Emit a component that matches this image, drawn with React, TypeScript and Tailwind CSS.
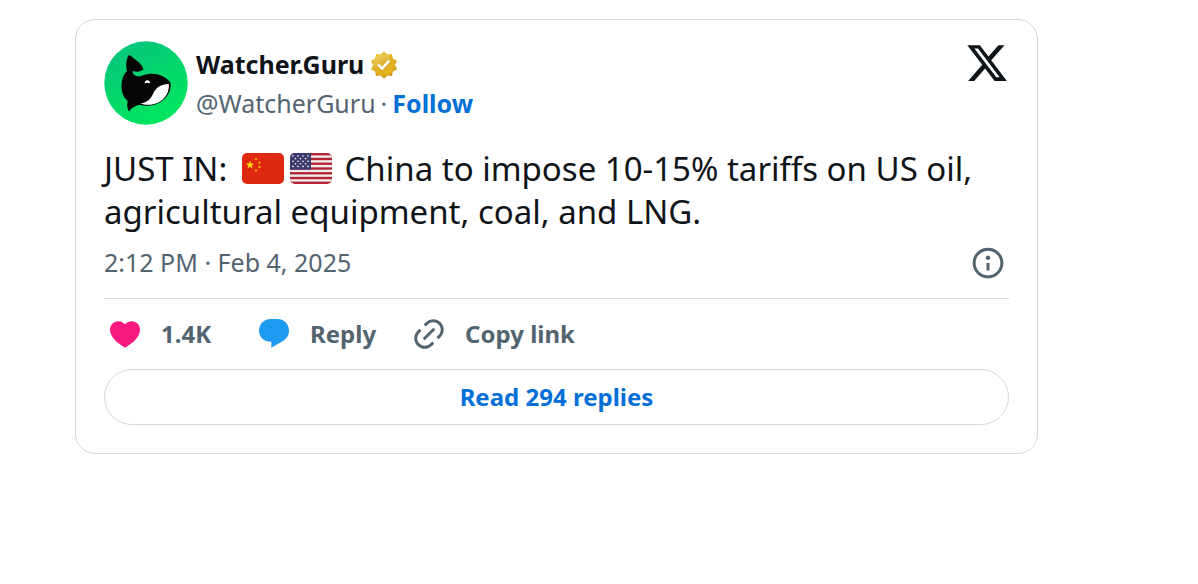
import type { ReactNode } from "react";

const STAR = "M0 -10 2.35 -3.24 9.5 -3.1 3.8 1.24 5.9 8.1 0 4 -5.9 8.1 -3.8 1.24 -9.5 -3.1 -2.35 -3.24z";

function Avatar() {
  return (
    <svg viewBox="0 0 84 84" className="block size-[84px]" role="img" aria-label="Watcher.Guru">
      <defs>
        <linearGradient id="avatar-bg" x1="0.2" y1="0" x2="0.7" y2="1">
          <stop offset="0" stopColor="#06c47c" />
          <stop offset="1" stopColor="#00e85c" />
        </linearGradient>
      </defs>
      <circle cx="42" cy="42" r="41.7" fill="url(#avatar-bg)" />
      <path
        d="M24.7 14C27 14.5 29 17 32 19C35.500 21.500 38 24 39.500 28.500C36.500 30.500 33 31.500 28.700 29.700C28.300 32.500 30 35 35 35.400C38.500 34.800 41 33 46 32.800C54 32.300 62 35.500 66.300 41.300C67.500 46 66 51 63 55C58.500 61 51 64.800 44 64.800C41 64.800 38 64.300 35.500 63.700C31 64.500 27.500 67 25 70.500C23 67.500 22.800 63.500 23.700 60C18.500 55.500 17.300 50 17.500 44C17.600 38 19.500 33.500 23 30C21.700 24.500 22 18.500 24.700 14Z"
        fill="#050505"
      />
      <path
        d="M64.800 43C65.800 54 57 63.800 44.500 63.800C41 63.800 38.500 63.400 36.500 62.500C43.500 61.500 46.500 58 49 53C51.500 47 56.500 43.300 64.800 43Z"
        fill="#fff"
      />
      <path d="M40.700 42.500C40.300 38.300 46.500 38.300 46 42.500C44.300 41.500 42.500 41.500 40.700 42.500Z" fill="#fff" />
    </svg>
  );
}

function GoldBadge() {
  return (
    <svg viewBox="0 0 22 22" className="size-8 shrink-0" role="img" aria-label="Verified account">
      <defs>
        <linearGradient id="badge-edge" x1="0.2" y1="0" x2="0.8" y2="1">
          <stop offset="0" stopColor="#f0c93a" />
          <stop offset="1" stopColor="#cb8f12" />
        </linearGradient>
        <linearGradient id="badge-fill" x1="0.2" y1="0" x2="0.8" y2="1">
          <stop offset="0" stopColor="#ecd268" />
          <stop offset="0.5" stopColor="#e0b025" />
          <stop offset="1" stopColor="#e4b616" />
        </linearGradient>
      </defs>
      <path
        d="M13.324 3.848L11 1.6 8.676 3.848l-3.201-.453-.559 3.184L2.06 8.095 3.48 11l-1.42 2.904 2.856 1.516.559 3.184 3.201-.452L11 20.4l2.324-2.248 3.201.452.559-3.184 2.856-1.516L18.52 11l1.42-2.905-2.856-1.516-.559-3.184z"
        fill="url(#badge-edge)"
      />
      <circle cx="11" cy="11" r="7.2" fill="url(#badge-fill)" />
      <path d="M6.234 12.123l3.428 3.228 5.683-6.206-1.347-1.247-4.4 4.795-2.072-2.072z" fill="#c98c10" />
      <path d="M6.234 11.423l3.428 3.428 5.683-6.206-1.347-1.247-4.4 4.795-2.072-2.072z" fill="#fff" />
    </svg>
  );
}

function ChinaFlag() {
  return (
    <svg viewBox="0 0 42 31" className="h-[31px] w-[42px]" role="img" aria-label="China">
      <rect width="42" height="31" rx="5" fill="#de2910" />
      <g fill="#ffde02">
        <path d={STAR} transform="translate(8 12) scale(.43)" />
        <path d={STAR} transform="translate(14 6) scale(.16)" />
        <path d={STAR} transform="translate(17.5 9.5) scale(.16)" />
        <path d={STAR} transform="translate(17.5 14) scale(.16)" />
        <path d={STAR} transform="translate(14 17.5) scale(.16)" />
      </g>
    </svg>
  );
}

function UsaFlag() {
  const stripes = [1, 3, 5, 7, 9, 11];
  const rows = [0, 1, 2, 3, 4];
  return (
    <svg viewBox="0 0 42 31" className="h-[31px] w-[42px]" role="img" aria-label="United States">
      <defs>
        <clipPath id="usa-shape">
          <rect width="42" height="31" rx="5" />
        </clipPath>
      </defs>
      <g clipPath="url(#usa-shape)">
        <rect width="42" height="31" fill="#b22334" />
        {stripes.map((n) => (
          <rect key={n} y={(n * 31) / 13} width="42" height={31 / 13} fill="#eee" />
        ))}
        <rect width="21" height="16.7" fill="#3c3b6e" />
        {rows.map((row) =>
          (row % 2 ? [5.5, 10.5, 15.5] : [3, 8, 13, 18]).map((x) => (
            <circle key={`${row}-${x}`} cx={x} cy={3 + row * 2.6} r="0.8" fill="#fff" />
          ))
        )}
      </g>
    </svg>
  );
}

function Icon({ d, className }: { d: string; className: string }) {
  return (
    <svg viewBox="0 0 24 24" fill="currentColor" aria-hidden="true" className={`shrink-0 ${className}`}>
      <path d={d} />
    </svg>
  );
}

const icons = {
  x: "M18.244 2.25h3.308l-7.227 8.26 8.502 11.24H16.17l-5.214-6.817L4.99 21.75H1.68l7.73-8.835L1.254 2.25H8.08l4.713 6.231zm-1.161 17.52h1.833L7.084 4.126H5.117z",
  info: "M13.5 8.5c0 .83-.67 1.5-1.5 1.5s-1.5-.67-1.5-1.5S11.17 7 12 7s1.5.67 1.5 1.5zM13 17v-5h-2v5h2zm-1 5.25c5.66 0 10.25-4.59 10.25-10.25S17.66 1.75 12 1.75 1.75 6.34 1.75 12 6.34 22.25 12 22.25zM20.25 12c0 4.56-3.69 8.25-8.25 8.25S3.75 16.56 3.75 12 7.44 3.75 12 3.75s8.25 3.69 8.25 8.25z",
  heart: "M20.884 13.19c-1.351 2.48-4.001 5.12-8.379 7.67l-.503.3-.504-.3c-4.379-2.55-7.029-5.19-8.382-7.67-1.36-2.5-1.41-4.86-.514-6.67.887-1.79 2.647-2.91 4.601-3.01 1.651-.09 3.368.56 4.798 2.01 1.429-1.45 3.146-2.1 4.796-2.01 1.954.1 3.714 1.22 4.601 3.01.896 1.81.846 4.17-.514 6.67z",
  reply: "M2 9.8C2 5.4 5.3 2 9.7 2h4.6C18.7 2 22 5.3 22 9.6c0 3.2-1.8 5.7-4.6 7.4L10.2 21.2v-4C5.3 17.3 2 13.9 2 9.8z",
  link: "M18.36 5.64c-1.95-1.96-5.11-1.96-7.07 0L9.88 7.05 8.46 5.64l1.42-1.42c2.73-2.73 7.16-2.73 9.9 0 2.73 2.74 2.73 7.17 0 9.9l-1.42 1.42-1.41-1.42 1.41-1.41c1.96-1.96 1.96-5.12 0-7.07zm-2.12 3.53l-7.07 7.07-1.41-1.41 7.07-7.07 1.41 1.41zm-12.02.71l1.42-1.42 1.41 1.42-1.41 1.41c-1.96 1.96-1.96 5.12 0 7.07 1.95 1.96 5.11 1.96 7.07 0l1.41-1.41 1.42 1.41-1.42 1.42c-2.73 2.73-7.16 2.73-9.9 0-2.73-2.74-2.73-7.17 0-9.9z",
};

function Action({ icon, color, children }: { icon: string; color: string; children: ReactNode }) {
  return (
    <button type="button" className="flex items-center gap-[18px] text-2xl font-bold text-[#536471] hover:underline">
      <Icon d={icon} className={`size-9 ${color}`} />
      <span className="min-w-15 text-left">{children}</span>
    </button>
  );
}

export default function App() {
  return (
    <main className="bg-white pt-[19px] pr-40 pl-[75px] font-['Noto_Sans',sans-serif] text-[#0f1419]">
      <article className="rounded-[20px] border border-[#cfd9de] px-7 pt-[21px] pb-7">
        {/* Author */}
        <header className="flex items-start">
          <a href="#profile" className="shrink-0">
            <Avatar />
          </a>
          <div className="ml-2 pt-1">
            <div className="flex h-10 items-center gap-1">
              <a href="#profile" className="text-[25px] font-bold">Watcher.Guru</a>
              <GoldBadge />
            </div>
            <div className="flex h-[38px] items-center gap-[5px] text-[25px] text-[#536471]">
              <a href="#profile">@WatcherGuru</a>
              <span>·</span>
              <a href="#follow" className="font-bold text-[#006fd6]">Follow</a>
            </div>
          </div>
          <a href="#post" aria-label="View on X" className="ml-auto">
            <Icon d={icons.x} className="size-11" />
          </a>
        </header>

        {/* Post text */}
        <p className="mt-[22px] text-[33px] leading-[43px]">
          JUST IN:{" "}
          <span className="mr-1 ml-1.5 inline-flex gap-1.5 align-[-3px]">
            <ChinaFlag />
            <UsaFlag />
          </span>{" "}
          China to impose 10-15% tariffs on US oil, agricultural equipment, coal, and LNG.
        </p>

        <div className="mt-[11px] flex items-center justify-between pr-[3px] text-[25px] text-[#536471]">
          <a href="#post">
            <time dateTime="2025-02-04T14:12">2:12 PM · Feb 4, 2025</time>
          </a>
          <a href="#ads-info" aria-label="Ads info and privacy">
            <Icon d={icons.info} className="size-9" />
          </a>
        </div>

        {/* Actions */}
        <div className="mt-4 flex gap-[35px] border-t border-[#cfd9de] pt-[17px] pl-[3px]">
          <Action icon={icons.heart} color="text-[#f91880]">1.4K</Action>
          <Action icon={icons.reply} color="text-[#1d9bf0]">Reply</Action>
          <Action icon={icons.link} color="text-[#536471]">Copy link</Action>
        </div>
        <a
          href="#replies"
          className="mt-[17px] flex h-14 items-center justify-center rounded-full border border-[#cfd9de] text-2xl font-bold text-[#006fd6]"
        >
          Read 294 replies
        </a>
      </article>
    </main>
  );
}
